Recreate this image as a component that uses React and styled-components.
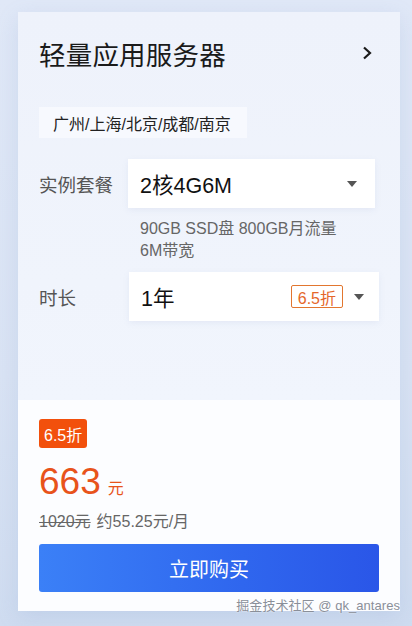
import React from "react";
import styled, { createGlobalStyle } from "styled-components";

const Global = createGlobalStyle`
  html, body { margin: 0; padding: 0; }
  body {
    background: linear-gradient(180deg, #e0e8f7 0%, #d9e3f4 60%, #cfdcf0 100%);
    font-family: "Liberation Sans", "Noto Sans CJK SC", sans-serif;
    width: 412px;
    height: 626px;
    overflow: hidden;
  }
`;

const Page = styled.div`
  position: relative;
  width: 412px;
  height: 626px;
  padding: 12px 12px 0 18px;
  box-sizing: border-box;
`;

const Card = styled.div`
  width: 382px;
  height: 599px;
  display: flex;
  flex-direction: column;
  box-shadow: 0 6px 20px rgba(120, 150, 200, 0.18);
`;

const Upper = styled.div`
  height: 388px;
  box-sizing: border-box;
  padding: 25px 21px 0 21px;
  background: linear-gradient(180deg, #eef2fb 0%, #f0f4fc 70%, #f1f5fd 100%);
  display: flex;
  flex-direction: column;
`;

const Header = styled.div`
  display: flex;
  align-items: center;
  justify-content: space-between;
  height: 32px;
  padding-right: 6px;
`;

const Title = styled.h1`
  margin: 0;
  font-size: 26.5px;
  font-weight: 400;
  color: #1a1a1a;
  letter-spacing: 0.2px;
`;

const Region = styled.div`
  align-self: flex-start;
  margin-top: 38px;
  height: 31px;
  padding: 0 16px 0 14px;
  display: flex;
  align-items: center;
  background: #f7f9fe;
  font-size: 16px;
  color: #222;
`;

const Row = styled.div`
  display: flex;
  align-items: center;
  margin-top: ${(p) => p.$mt}px;
`;

const Label = styled.div`
  width: ${(p) => p.$w}px;
  flex-shrink: 0;
  font-size: 18.5px;
  color: #555;
`;

const Select = styled.div`
  width: ${(p) => p.$w}px;
  flex-shrink: 0;
  height: 49px;
  box-sizing: border-box;
  background: #fff;
  display: flex;
  align-items: center;
  padding: 0 ${(p) => p.$pr}px 0 12px;
  box-shadow: 0 2px 6px rgba(140, 160, 200, 0.12);
  font-size: 21.5px;
  color: #111;
`;

const Value = styled.span`
  flex: 1;
`;

const Caret = styled.span`
  width: 0;
  height: 0;
  border-left: 5.5px solid transparent;
  border-right: 5.5px solid transparent;
  border-top: 6px solid #555;
`;

const OutlineBadge = styled.span`
  display: inline-flex;
  align-items: center;
  height: 23px;
  box-sizing: border-box;
  padding: 0 6px;
  border: 1px solid #e2762f;
  border-radius: 2px;
  color: #e5672b;
  font-size: 16px;
  margin-right: 11px;
`;

const Desc = styled.div`
  margin: 10px 0 0 101px;
  font-size: 16px;
  line-height: 22px;
  color: #666;
`;

const Lower = styled.div`
  flex: 1;
  background: #fcfdff;
  padding: 19px 21px 0 21px;
  display: flex;
  flex-direction: column;
`;

const FillBadge = styled.div`
  align-self: flex-start;
  height: 29px;
  padding: 0 5px;
  display: flex;
  align-items: center;
  background: #f2500c;
  border-radius: 3px;
  color: #fff;
  font-size: 16px;
`;

const PriceLine = styled.div`
  margin-top: 13px;
  display: flex;
  align-items: baseline;
  color: #e8531b;
  height: 44px;
`;

const Price = styled.span`
  font-size: 37px;
`;

const Unit = styled.span`
  font-size: 16px;
  margin-left: 7px;
`;

const SubLine = styled.div`
  margin-top: 3px;
  font-size: 16px;
  color: #666;
`;

const Strike = styled.span`
  text-decoration: line-through;
  margin-right: 6px;
`;

const BuyButton = styled.button`
  margin-top: 12px;
  width: 340px;
  height: 48px;
  border: none;
  border-radius: 3px;
  background: linear-gradient(90deg, #3b80f7 0%, #2f66ee 60%, #2a56e8 100%);
  color: #fff;
  font-family: inherit;
  font-size: 20px;
  cursor: pointer;
`;

const Watermark = styled.div`
  position: absolute;
  right: 12px;
  top: 595px;
  font-size: 13px;
  color: #8a8f99;
  letter-spacing: 0.05px;
  text-shadow: 0 0 2px #fff;
`;

const Chevron = () => (
  <svg width="12" height="14" viewBox="0 0 12 14">
    <path d="M3 1.5 L9 7 L3 12.5" fill="none" stroke="#1a1a1a" strokeWidth="2.2" />
  </svg>
);

export default function App() {
  return (
    <>
      <Global />
      <Page>
        <Card>
          <Upper>
            <Header>
              <Title>轻量应用服务器</Title>
              <Chevron />
            </Header>
            <Region>广州/上海/北京/成都/南京</Region>
            <Row $mt={21}>
              <Label $w={89}>实例套餐</Label>
              <Select $w={247} $pr={18}>
                <Value>2核4G6M</Value>
                <Caret />
              </Select>
            </Row>
            <Desc>
              90GB SSD盘 800GB月流量
              <br />
              6M带宽
            </Desc>
            <Row $mt={10}>
              <Label $w={90}>时长</Label>
              <Select $w={250} $pr={15}>
                <Value>1年</Value>
                <OutlineBadge>6.5折</OutlineBadge>
                <Caret />
              </Select>
            </Row>
          </Upper>
          <Lower>
            <FillBadge>6.5折</FillBadge>
            <PriceLine>
              <Price>663</Price>
              <Unit>元</Unit>
            </PriceLine>
            <SubLine>
              <Strike>1020元</Strike>约55.25元/月
            </SubLine>
            <BuyButton>立即购买</BuyButton>
          </Lower>
        </Card>
        <Watermark>掘金技术社区 @ qk_antares</Watermark>
      </Page>
    </>
  );
}
